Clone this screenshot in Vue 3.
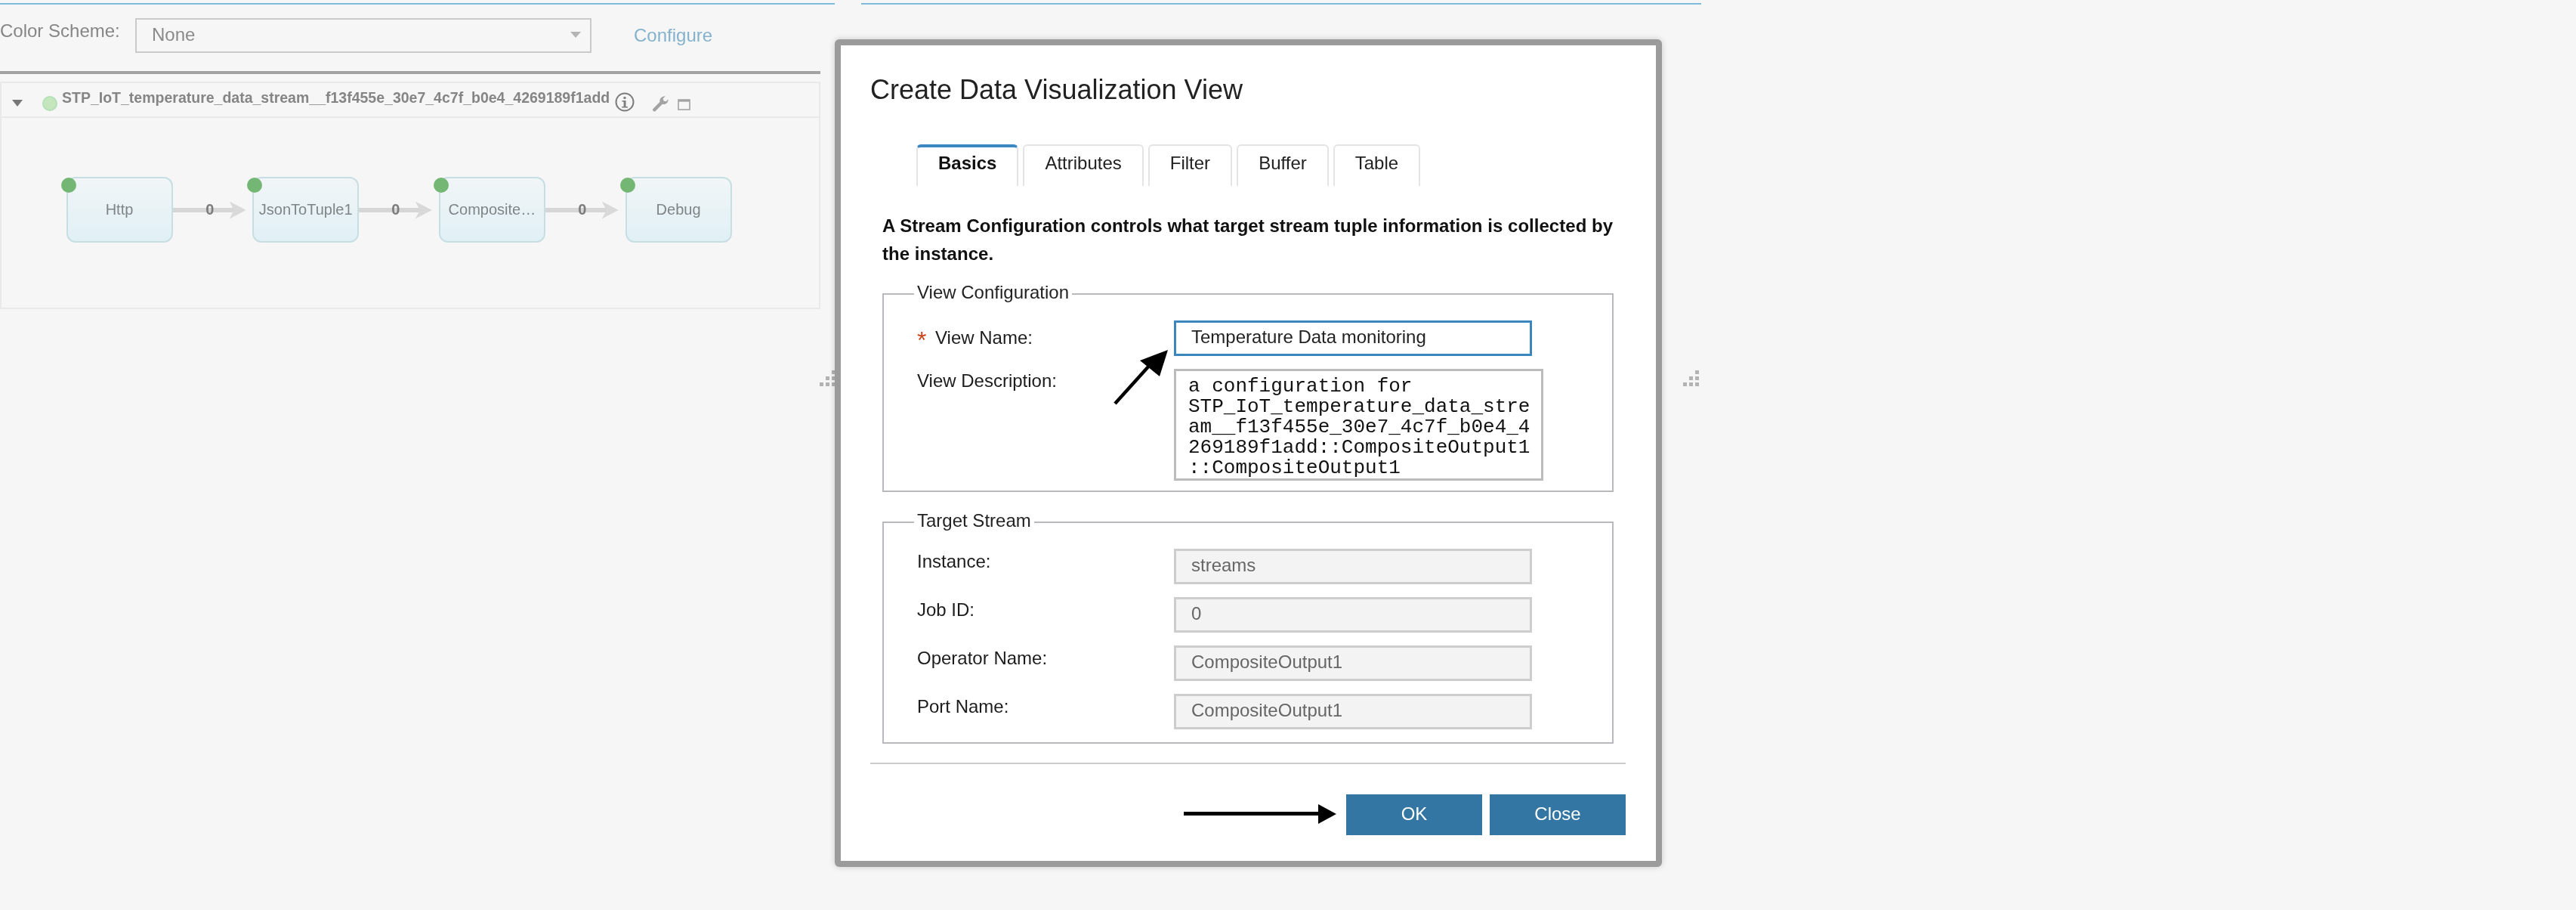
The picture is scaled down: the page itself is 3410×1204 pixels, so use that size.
<script setup>
const nodes = ['Http', 'JsonToTuple1', 'Composite…', 'Debug']
const tabs = ['Basics', 'Attributes', 'Filter', 'Buffer', 'Table']
const targets = [
  { label: 'Instance:', value: 'streams' },
  { label: 'Job ID:', value: '0' },
  { label: 'Operator Name:', value: 'CompositeOutput1' },
  { label: 'Port Name:', value: 'CompositeOutput1' }
]
const dots = [[16, 0], [8, 8], [16, 8], [0, 16], [8, 16], [16, 16]]
</script>

<template>
  <div class="page">
    <section class="pane left">
      <div class="scheme">
        <span class="scheme-label">Color Scheme:</span>
        <div class="select">
          <span>None</span>
          <i class="caret"></i>
        </div>
        <a class="configure">Configure</a>
      </div>
      <div class="rule"></div>
      <div class="panel">
        <header class="panel-head">
          <i class="collapse"></i>
          <i class="health"></i>
          <b class="job">STP_IoT_temperature_data_stream__f13f455e_30e7_4c7f_b0e4_4269189f1add</b>
          <svg class="ico-info" width="26" height="26" viewBox="0 0 26 26">
            <circle cx="13" cy="13" r="11.5" fill="none" stroke="#7d7d7d" stroke-width="2" />
            <circle cx="13" cy="7.500" r="1.700" fill="#7d7d7d" />
            <path d="M9.500 11h5v8h2.500v1.600H9.200V19h2.400v-6.400H9.500z" fill="#7d7d7d" />
          </svg>
          <svg class="ico-wrench" width="22" height="22" viewBox="0 0 22 22">
            <path d="M1 18.500 10.500 8.800C9.700 5 12.600 1 17.800 1.200L14.600 4.400l1 3 3 .8 3-3c.3 4.800-3.900 7.800-7.800 6.600L4.200 21.500C2.500 22 .5 20.300 1 18.500z" fill="#a3a3a3" />
          </svg>
          <svg class="ico-win" width="17" height="15" viewBox="0 0 17 15">
            <rect x="1" y="1" width="15" height="13" fill="none" stroke="#a3a3a3" stroke-width="1.600" />
            <rect x="1" y="1" width="15" height="2.600" fill="#a3a3a3" />
          </svg>
        </header>
        <div class="flow">
          <template v-for="(n, i) in nodes" :key="n">
            <div class="node">
              <i class="node-dot"></i>
              <span>{{ n }}</span>
            </div>
            <svg v-if="i < nodes.length - 1" class="edge" width="106" height="26" viewBox="0 0 106 26">
              <path d="M0 10h84v6H0z" fill="#d6d6d6" />
              <path d="M75 1.500 97 13 75 24.500 81 13z" fill="#d9d9d9" />
              <text x="49" y="19.500" text-anchor="middle" class="edge-count">0</text>
            </svg>
          </template>
        </div>
      </div>
    </section>

    <section class="pane right"></section>

    <div class="grip grip-a">
      <i v-for="(d, k) in dots" :key="k" :style="{ left: d[0] + 'px', top: d[1] + 'px' }"></i>
    </div>
    <div class="grip grip-b">
      <i v-for="(d, k) in dots" :key="k" :style="{ left: d[0] + 'px', top: d[1] + 'px' }"></i>
    </div>

    <div class="dialog">
      <h1 class="title">Create Data Visualization View</h1>
      <nav class="tabs">
        <a v-for="(t, i) in tabs" :key="t" class="tab" :class="{ active: i === 0 }">{{ t }}</a>
      </nav>
      <div class="body">
        <p class="intro">A Stream Configuration controls what target stream tuple information is collected by the instance.</p>
        <fieldset class="group group-view">
          <legend>View Configuration</legend>
          <div class="row first">
            <label class="lbl"><span class="req">*</span>View Name:</label>
            <div class="field focus">Temperature Data monitoring</div>
          </div>
          <div class="row desc">
            <label class="lbl">View Description:</label>
            <div class="area">a configuration for STP_IoT_temperature_data_stream__f13f455e_30e7_4c7f_b0e4_4269189f1add::CompositeOutput1::CompositeOutput1</div>
          </div>
        </fieldset>
        <fieldset class="group group-target">
          <legend>Target Stream</legend>
          <div v-for="t in targets" :key="t.label" class="row target">
            <label class="lbl">{{ t.label }}</label>
            <div class="field off">{{ t.value }}</div>
          </div>
        </fieldset>
      </div>
      <footer class="foot">
        <button class="btn">OK</button>
        <button class="btn">Close</button>
      </footer>
    </div>

    <svg class="arrow arrow-a" width="80" height="76" viewBox="0 0 80 76">
      <path d="M3 73 49 22" stroke="#000" stroke-width="4.500" fill="none" />
      <path d="M73 2 62 37 36 16z" fill="#000" />
    </svg>
    <svg class="arrow arrow-b" width="206" height="28" viewBox="0 0 206 28">
      <path d="M2 13.500h180" stroke="#000" stroke-width="5" fill="none" />
      <path d="M180 1 204 14 180 27z" fill="#000" />
    </svg>
  </div>
</template>

<style>
html, body { margin: 0; background: #f6f6f6; }
</style>

<style scoped>
.page {
  position: relative;
  width: 3410px;
  height: 1204px;
  display: flex;
  align-items: flex-start;
  overflow: hidden;
  background: #f6f6f6;
  font-family: "Liberation Sans", Arial, sans-serif;
  color: #111;
  filter: blur(0.5px);
}
.pane {
  margin-top: 4px;
  border-top: 2px solid #7cbcda;
  box-sizing: border-box;
}
.left { width: 1105px; }
.right { width: 1112px; margin-left: 35px; height: 10px; }

.scheme {
  height: 88px;
  display: flex;
  align-items: flex-start;
  width: 1087px;
}
.scheme-label { font-size: 24px; line-height: 28px; margin-top: 21px; width: 179px; color: #868686; }
.select {
  box-sizing: border-box;
  width: 604px;
  height: 46px;
  margin-top: 18px;
  border: 2px solid #cacaca;
  padding: 0 12px 2px 20px;
  display: flex;
  align-items: center;
  justify-content: space-between;
  font-size: 24px;
  color: #8a8a8a;
}
.caret {
  width: 0;
  height: 0;
  border-left: 7px solid transparent;
  border-right: 7px solid transparent;
  border-top: 8px solid #b4b4b4;
}
.configure { margin: 26px 0 0 56px; font-size: 24px; line-height: 30px; color: #84b2cd; }
.rule { width: 1086px; height: 4px; background: #a3a3a3; }

.panel {
  box-sizing: border-box;
  width: 1086px;
  height: 301px;
  margin-top: 10px;
  border: 2px solid #e9e9e9;
}
.panel-head {
  box-sizing: border-box;
  height: 46px;
  border-bottom: 2px solid #e9e9e9;
  display: flex;
  align-items: flex-start;
  position: relative;
}
.collapse {
  margin: 22px 0 0 14px;
  border-left: 7px solid transparent;
  border-right: 7px solid transparent;
  border-top: 9px solid #777;
}
.health {
  box-sizing: border-box;
  width: 20px;
  height: 20px;
  margin: 17px 0 0 26px;
  border-radius: 50%;
  background: #c5e6bc;
  border: 2px solid #b3e0b5;
}
.job { margin: 7px 0 0 6px; font-size: 19.5px; line-height: 24px; color: #858585; white-space: nowrap; }
.ico-info { margin: 12px 0 0 7px; }
.ico-wrench { margin: 16px 0 0 23px; }
.ico-win { margin: 21px 0 0 12px; }

.flow {
  display: flex;
  align-items: center;
  padding: 78px 0 0 85.500px;
}
.node {
  box-sizing: border-box;
  position: relative;
  width: 141px;
  height: 87px;
  border: 2px solid #c7dfe3;
  border-radius: 12px;
  background: linear-gradient(#f1f5f7, #e0f0f5);
  display: flex;
  align-items: center;
  justify-content: center;
  font-size: 20px;
  color: #7e8587;
  white-space: nowrap;
}
.node-dot {
  position: absolute;
  left: -9px;
  top: -1px;
  width: 20px;
  height: 20px;
  border-radius: 50%;
  background: #74b673;
}
.edge { flex: none; width: 105.700px; }
.edge-count { font-size: 20px; font-weight: 700; fill: #7c7c7c; font-family: "Liberation Sans", Arial, sans-serif; }

.grip { position: absolute; width: 22px; height: 22px; }
.grip i { position: absolute; width: 5px; height: 5px; background: #b3b3b3; }
.grip-a { left: 1085px; top: 490px; }
.grip-b { left: 2228px; top: 490px; }

.dialog {
  position: absolute;
  left: 1105px;
  top: 52px;
  box-sizing: border-box;
  width: 1095px;
  height: 1095px;
  border: 8px solid #9b9b9b;
  border-radius: 6px;
  background: #fff;
  box-shadow: 0 0 8px rgba(0, 0, 0, 0.18);
  padding: 0 40px 0 39px;
  display: flex;
  flex-direction: column;
}
.title { margin: 34px 0 0; font-size: 36px; line-height: 50px; font-weight: 400; color: #222; }
.tabs { display: flex; gap: 6px; margin: 47px 0 0 61px; height: 55px; }
.tab {
  box-sizing: border-box;
  height: 55px;
  padding: 9px 27px 0;
  border: 2px solid #e4e4e4;
  border-bottom: 0;
  border-radius: 6px 6px 0 0;
  font-size: 24px;
  line-height: 28px;
  color: #222;
}
.tab.active { font-weight: 700; border-top: 4px solid #3a87c2; padding-top: 7px; color: #111; }
.body { padding: 0 16px; }
.intro { margin: 34px 0 0; font-size: 24px; line-height: 37px; font-weight: 700; color: #111; width: 975px; letter-spacing: 0.03px; }
.group {
  box-sizing: border-box;
  margin: 0;
  min-width: 0;
  width: 968px;
  border: 2px solid #b8b8bd;
  padding: 0 0 0 44px;
}
.group legend { padding: 0 4px 4px; margin-left: -4px; font-size: 24px; line-height: 28px; color: #222; }
.group-view { margin-top: 19px; height: 278px; }
.group-target { margin-top: 24px; height: 309px; }
.row { display: flex; align-items: flex-start; }
.lbl { width: 340px; flex: none; font-size: 24px; line-height: 28px; color: #1c1c1c; }
.req {
  display: inline-block;
  width: 24px;
  font-size: 32px;
  line-height: 0;
  vertical-align: -6px;
  color: #c8451b;
}
.field {
  box-sizing: border-box;
  width: 474px;
  height: 47px;
  padding: 0 0 3px 20px;
  display: flex;
  align-items: center;
  font-size: 24px;
}
.field.focus { border: 3px solid #3b87bd; color: #222; }
.field.off { border: 3px solid #cdcdcd; background: #f3f3f3; color: #666; }
.first { margin-top: 19px; }
.first .lbl { margin-top: 9px; }
.desc { margin-top: 17px; }
.desc .lbl { margin-top: 2px; }
.area {
  box-sizing: border-box;
  width: 489px;
  height: 148px;
  border: 3px solid #bcbcbc;
  padding: 7px 12px 0 16px;
  font-family: "Liberation Mono", "Courier New", monospace;
  font-size: 26px;
  line-height: 27px;
  overflow-wrap: anywhere;
  color: #111;
}
.target { margin-top: 17px; }
.target:first-of-type { margin-top: 19px; }
.target .lbl { margin-top: 3px; }
.foot {
  margin-top: 25px;
  padding-top: 40px;
  border-top: 2px solid #ccc;
  display: flex;
  justify-content: flex-end;
  gap: 10px;
}
.btn {
  width: 180px;
  height: 54px;
  border: 0;
  background: #3476a3;
  color: #fff;
  font-family: inherit;
  font-size: 24px;
  padding: 0 0 2px;
}
.arrow { position: absolute; }
.arrow-a { left: 1473px; top: 461px; }
.arrow-b { left: 1565px; top: 1063px; }
</style>
